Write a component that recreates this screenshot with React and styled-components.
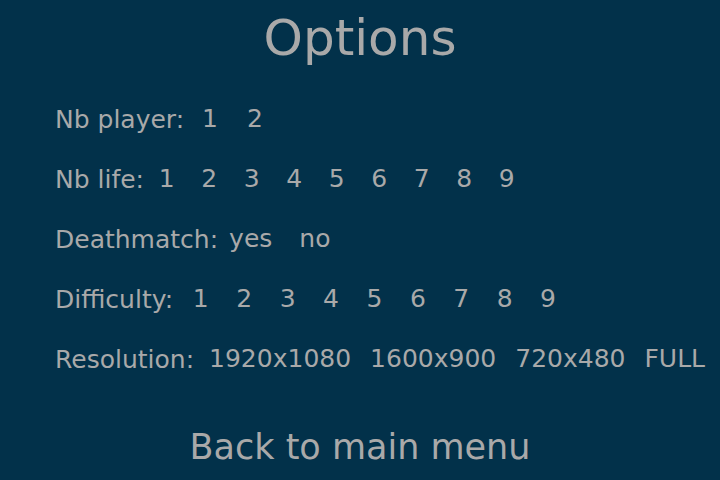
import { createGlobalStyle, styled } from 'styled-components';

const rows = [
  { label: 'Nb player:', options: ['1', '2'], lead: 3.5, pad: 14.5 },
  { label: 'Nb life:', options: ['1', '2', '3', '4', '5', '6', '7', '8', '9'], lead: 1.5, pad: 13.3 },
  { label: 'Deathmatch:', options: ['yes', 'no'], lead: -2.5, pad: 13.5 },
  { label: 'Difficulty:', options: ['1', '2', '3', '4', '5', '6', '7', '8', '9'], lead: 6, pad: 13.75 },
  { label: 'Resolution:', options: ['1920x1080', '1600x900', '720x480', 'FULL'], lead: 5.5, pad: 9.5 },
];

const App = () => {
  return (
    <>
      <GlobalStyle />
      <Screen>
        <Title>Options</Title>
        <List>
          {rows.map(row => (
            <Row key={row.label}>
              <Label $lead={row.lead}>{row.label}</Label>
              {row.options.map(option => (
                <Option key={option} $pad={row.pad}>
                  {option}
                </Option>
              ))}
            </Row>
          ))}
        </List>
        <Back>Back to main menu</Back>
      </Screen>
    </>
  );
};

export default App;

const GlobalStyle = createGlobalStyle`
  html, body {
    margin: 0;
    padding: 0;
    background: #02314a;
  }
`;

const Screen = styled.div`
  width: 720px;
  height: 480px;
  overflow: hidden;
  display: flex;
  flex-direction: column;
  padding-top: 3px;
  box-sizing: border-box;
  background: #02314a;
  color: #a9a9a9;
  font-family: 'DejaVu Sans', Verdana, sans-serif;
`;

const Title = styled.h1`
  margin: 0;
  font-size: 50px;
  font-weight: 400;
  line-height: 70px;
  text-align: center;
`;

const List = styled.div`
  display: flex;
  flex-direction: column;
  margin-top: 17px;
  padding-left: 55px;
`;

const Row = styled.div`
  display: flex;
  align-items: baseline;
  height: 60px;
  line-height: 60px;
  font-size: 25px;
  white-space: nowrap;
`;

const Label = styled.span`
  margin-right: ${props => props.$lead}px;
`;

const Option = styled.span`
  padding: 0 ${props => props.$pad}px;
  position: relative;
  top: -1px;
  cursor: pointer;
`;

const Back = styled.div`
  margin-top: 32px;
  font-size: 35px;
  line-height: 50px;
  text-align: center;
  cursor: pointer;
`;
